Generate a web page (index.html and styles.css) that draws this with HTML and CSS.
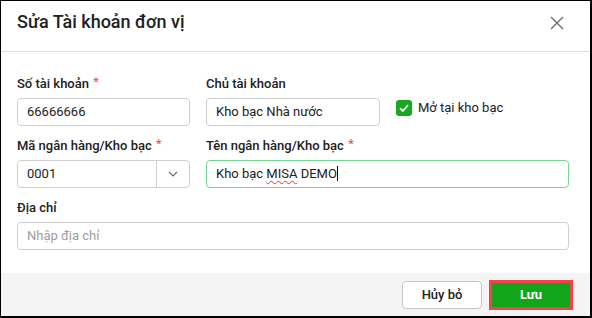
FILE: index.html
```html
<!DOCTYPE html>
<html lang="vi">
<head>
    <meta charset="UTF-8">
    <title>Sửa Tài khoản đơn vị</title>
    <link rel="stylesheet" href="styles.css">
</head>
<body>
    <div class="dialog">
        <header class="dialog-header">
            <h1 class="dialog-title">Sửa Tài khoản đơn vị</h1>
            <button class="close-btn" type="button" aria-label="Đóng">
                <svg width="14" height="14" viewBox="0 0 14 14">
                    <path d="M1 1L13 13M13 1L1 13" stroke="#6b6b6b" stroke-width="1.4" fill="none"/>
                </svg>
            </button>
        </header>

        <div class="dialog-body">
            <div class="field">
                <label class="label">Số tài khoản <span class="req">*</span></label>
                <div class="input">66666666</div>
            </div>
            <div class="field">
                <label class="label">Chủ tài khoản</label>
                <div class="input">Kho bạc Nhà nước</div>
            </div>
            <div class="check-cell">
                <span class="checkbox">
                    <svg width="10" height="8" viewBox="0 0 10 8">
                        <path d="M1 4.2L3.8 7L9 1.2" stroke="#fff" stroke-width="1.8" fill="none"/>
                    </svg>
                </span>
                <span class="check-label">Mở tại kho bạc</span>
            </div>

            <div class="field">
                <label class="label">Mã ngân hàng/Kho bạc <span class="req">*</span></label>
                <div class="input combo">
                    <span class="combo-value">0001</span>
                    <span class="combo-arrow">
                        <svg width="10" height="6" viewBox="0 0 10 6">
                            <path d="M1 1L5 5L9 1" stroke="#6b6b6b" stroke-width="1.2" fill="none"/>
                        </svg>
                    </span>
                </div>
            </div>
            <div class="field span-2">
                <label class="label">Tên ngân hàng/Kho bạc <span class="req">*</span></label>
                <div class="input focused">Kho bạc <span class="misspelt">MISA</span> DEMO<span class="caret"></span></div>
            </div>

            <div class="field span-3">
                <label class="label">Địa chỉ</label>
                <div class="input placeholder">Nhập địa chỉ</div>
            </div>
        </div>

        <footer class="dialog-footer">
            <button class="btn btn-secondary" type="button">Hủy bỏ</button>
            <button class="btn btn-primary" type="button">Lưu</button>
        </footer>
    </div>
</body>
</html>
```

FILE: styles.css
```css
* {
    box-sizing: border-box;
}

body {
    margin: 0;
    font-family: Roboto, "Noto Sans", sans-serif;
    color: #212121;
    background-color: #fff;
}

.dialog {
    width: 592px;
    height: 318px;
    border-style: solid;
    border-color: #000;
    border-width: 1px 2px 2px 1px;
    display: flex;
    flex-direction: column;
    background-color: #fff;
}

.dialog-header {
    height: 51px;
    padding: 9px 26px 0 16px;
    border-bottom: 1px solid #dedede;
    display: flex;
    align-items: flex-start;
    justify-content: space-between;
}

.dialog-title {
    margin: 0;
    font-size: 18px;
    line-height: 24px;
    font-weight: 500;
}

.close-btn {
    border: none;
    background: none;
    padding: 0;
    margin-top: 6px;
    width: 14px;
    height: 14px;
    cursor: pointer;
}

.close-btn svg {
    display: block;
}

.dialog-body {
    flex: 1;
    padding: 24px 21px 0 16px;
    display: grid;
    grid-template-columns: 173px 174px 1fr;
    grid-auto-rows: 50px;
    column-gap: 16px;
    row-gap: 12px;
}

.field {
    display: flex;
    flex-direction: column;
}

.span-2 {
    grid-column: span 2;
}

.span-3 {
    grid-column: span 3;
}

.label {
    font-size: 13px;
    line-height: 16px;
    font-weight: 500;
    margin-bottom: 6px;
}

.req {
    color: #f4474f;
    font-size: 13px;
    font-weight: 400;
    position: relative;
    top: -2px;
    margin-left: 1px;
}

.input {
    height: 28px;
    border: 1px solid #cfcfcf;
    border-radius: 4px;
    padding: 0 9px;
    font-size: 13px;
    line-height: 26px;
    white-space: nowrap;
}

.input.focused {
    border-color: #74d493;
}

.input.placeholder {
    color: #9e9e9e;
}

.misspelt {
    text-decoration: underline wavy #e53935;
    text-decoration-thickness: 1px;
    text-underline-offset: 2px;
}

.caret {
    display: inline-block;
    width: 1px;
    height: 15px;
    background-color: #000;
    vertical-align: -3px;
}

.combo {
    display: flex;
    padding: 0;
}

.combo-value {
    flex: 1;
    padding-left: 9px;
}

.combo-arrow {
    width: 33px;
    border-left: 1px solid #cfcfcf;
    display: flex;
    align-items: center;
    justify-content: center;
}

.combo-arrow svg {
    display: block;
}

.check-cell {
    display: flex;
    align-items: center;
    gap: 6px;
    padding-top: 24px;
    align-self: start;
}

.checkbox {
    width: 16px;
    height: 16px;
    border-radius: 3px;
    background-color: #17a81f;
    display: flex;
    align-items: center;
    justify-content: center;
}

.check-label {
    font-size: 13px;
    line-height: 16px;
}

.dialog-footer {
    height: 43px;
    background-color: #f4f4f4;
    display: flex;
    align-items: center;
    justify-content: flex-end;
    gap: 7px;
    padding-right: 17px;
}

.btn {
    font-family: inherit;
    font-size: 13px;
    font-weight: 500;
    border-radius: 4px;
    cursor: pointer;
}

.btn-secondary {
    width: 80px;
    height: 28px;
    background-color: #fff;
    border: 1px solid #c6c6c6;
    color: #212121;
}

.btn-primary {
    width: 84px;
    height: 30px;
    background-color: #10a51b;
    border: 3px solid #f2424a;
    border-radius: 0;
    color: #fff;
    font-weight: 700;
}
```
